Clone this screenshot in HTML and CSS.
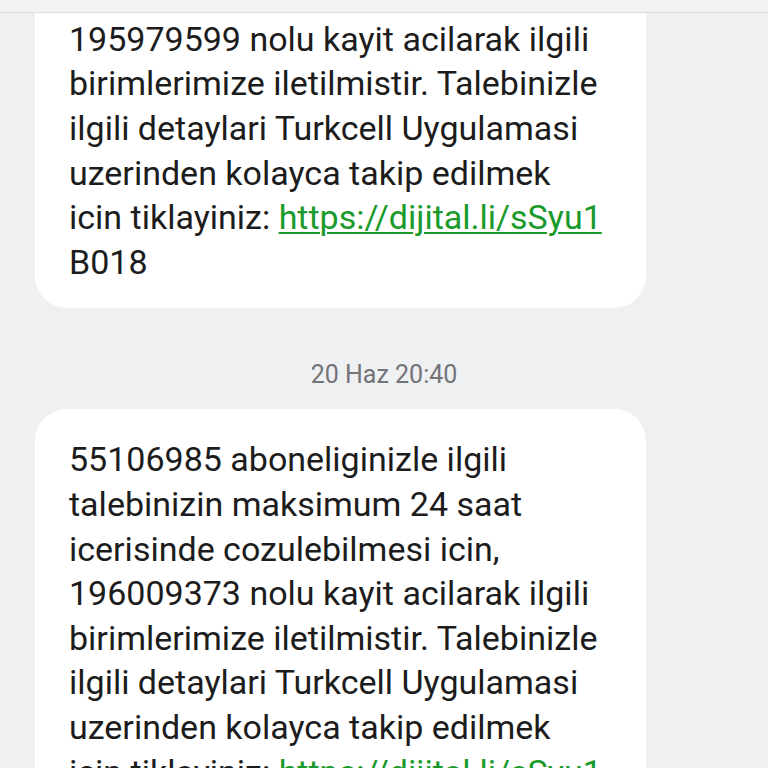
FILE: index.html
```html
<!DOCTYPE html>
<html lang="tr">
<head>
<meta charset="utf-8">
<link rel="stylesheet" href="styles.css">
</head>
<body>
<div class="topbar"></div>
<div class="chat">
  <div class="scroll">
    <div class="bubble">
      <p class="msg">55106985 aboneliginizle ilgili<br>talebinizin maksimum 24 saat<br>icerisinde cozulebilmesi icin,<br>195979599 nolu kayit acilarak ilgili<br>birimlerimize iletilmistir. Talebinizle<br>ilgili detaylari Turkcell Uygulamasi<br>uzerinden kolayca takip edilmek<br>icin tiklayiniz: <a class="link" href="#">https://dijital.li/sSyu1</a><br>B018</p>
    </div>
    <div class="stamp">20 Haz 20:40</div>
    <div class="bubble">
      <p class="msg">55106985 aboneliginizle ilgili<br>talebinizin maksimum 24 saat<br>icerisinde cozulebilmesi icin,<br>196009373 nolu kayit acilarak ilgili<br>birimlerimize iletilmistir. Talebinizle<br>ilgili detaylari Turkcell Uygulamasi<br>uzerinden kolayca takip edilmek<br>icin tiklayiniz: <a class="link" href="#">https://dijital.li/sSyu1</a><br>B018</p>
    </div>
  </div>
</div>
</body>
</html>
```
FILE: styles.css
```css
html, body {
  margin: 0;
  padding: 0;
  height: 100%;
  overflow: hidden;
}
body {
  background: #eff0f2;
  font-family: Roboto, "Noto Sans", sans-serif;
  color: #1c1c1c;
}
.topbar {
  height: 12px;
  background: #f2f2f3;
  border-bottom: 1px solid #dcdcde;
}
.chat {
  height: 755px;
  overflow: hidden;
}
.scroll {
  margin-top: -158px;
  display: flex;
  flex-direction: column;
}
.bubble {
  margin-left: 35px;
  width: 611px;
  box-sizing: border-box;
  background: #ffffff;
  border-radius: 32px;
  padding: 28px 10px 24px 34px;
}
.msg {
  margin: 0;
  font-size: 34px;
  line-height: 44.6px;
  white-space: nowrap;
}
.link {
  color: #1a9a2a;
  text-decoration: underline;
  text-decoration-thickness: 2px;
  text-underline-offset: 3px;
}
.stamp {
  text-align: center;
  color: #737478;
  font-size: 25px;
  line-height: 30px;
  padding: 52px 0 19px 0;
}
```
